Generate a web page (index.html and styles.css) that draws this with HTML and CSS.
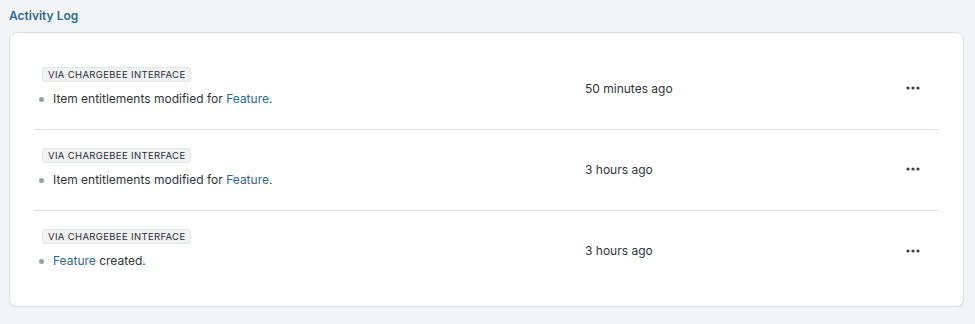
FILE: index.html
```html
<!DOCTYPE html>
<html lang="en">
<head>
  <meta charset="UTF-8" />
  <title>Activity Log</title>
  <link rel="stylesheet" href="styles.css">
</head>
<body>
  <h3 class="section-title">Activity Log</h3>
  <div class="card">
    <div class="log-row">
      <div class="log-main">
        <span class="badge">VIA CHARGEBEE INTERFACE</span>
        <p class="log-text"><span class="dot"></span>Item entitlements modified for <a href="#">Feature</a>.</p>
      </div>
      <div class="log-time">50 minutes ago</div>
      <button class="more-btn" aria-label="More">
        <svg width="14" height="4" viewBox="0 0 14 4"><circle cx="2" cy="2" r="1.6"/><circle cx="7" cy="2" r="1.6"/><circle cx="12" cy="2" r="1.6"/></svg>
      </button>
    </div>
    <div class="log-row">
      <div class="log-main">
        <span class="badge">VIA CHARGEBEE INTERFACE</span>
        <p class="log-text"><span class="dot"></span>Item entitlements modified for <a href="#">Feature</a>.</p>
      </div>
      <div class="log-time">3 hours ago</div>
      <button class="more-btn" aria-label="More">
        <svg width="14" height="4" viewBox="0 0 14 4"><circle cx="2" cy="2" r="1.6"/><circle cx="7" cy="2" r="1.6"/><circle cx="12" cy="2" r="1.6"/></svg>
      </button>
    </div>
    <div class="log-row">
      <div class="log-main">
        <span class="badge">VIA CHARGEBEE INTERFACE</span>
        <p class="log-text"><span class="dot"></span><a href="#">Feature</a> created.</p>
      </div>
      <div class="log-time">3 hours ago</div>
      <button class="more-btn" aria-label="More">
        <svg width="14" height="4" viewBox="0 0 14 4"><circle cx="2" cy="2" r="1.6"/><circle cx="7" cy="2" r="1.6"/><circle cx="12" cy="2" r="1.6"/></svg>
      </button>
    </div>
  </div>
</body>
</html>
```

FILE: styles.css
```css
body {
  font-family: Inter, 'Noto Sans', sans-serif;
  background: #f3f4f6;
  margin: 0;
  padding: 8px 11px 0 9px;
  color: #30343a;
}
.section-title {
  margin: 0 0 9px;
  font-size: 12px;
  font-weight: 600;
  line-height: 15px;
  color: #2f6a8f;
}
.card {
  background: white;
  border: 1px solid #dcdfe4;
  border-radius: 8px;
  box-shadow: 0 2px 0 #e6e8eb;
  padding: 16px 24px 14px;
}
.log-row {
  display: grid;
  grid-template-columns: 543px 1fr 40px;
  align-items: center;
  height: 81px;
  box-sizing: border-box;
  padding: 0 19px 2px 8px;
  border-bottom: 1px solid #dcdfe4;
}
.log-row:last-child {
  border-bottom: none;
}
.log-main {
  align-self: start;
  padding-top: 18px;
  display: flex;
  flex-direction: column;
  align-items: flex-start;
}
.badge {
  font-size: 9.5px;
  font-weight: 400;
  letter-spacing: 0.35px;
  line-height: 13px;
  padding: 0 5px;
  background: #f1f2f4;
  border: 1px solid #e3e5e8;
  border-radius: 3px;
  color: #2b2f36;
}
.log-text {
  margin: 9px 0 0;
  font-size: 12px;
  line-height: 16px;
}
.dot {
  display: inline-block;
  width: 5px;
  height: 5px;
  border-radius: 50%;
  background: #9a9ea5;
  margin: 0 9px 1px -3px;
  vertical-align: middle;
}
.log-text a {
  color: #2f6a8f;
  text-decoration: none;
}
.log-time {
  font-size: 12px;
  color: #30343a;
}
.more-btn {
  border: none;
  background: none;
  padding: 0;
  line-height: 0;
  cursor: pointer;
  justify-self: end;
  fill: #3a3f47;
}
```
